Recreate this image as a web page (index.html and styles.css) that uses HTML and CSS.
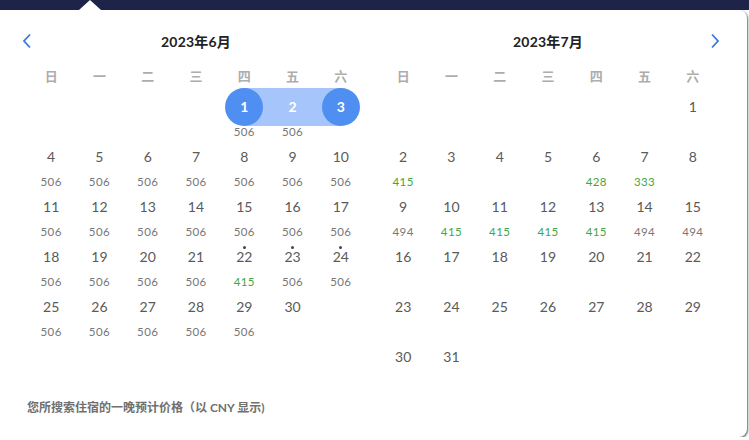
FILE: index.html
```html
<!DOCTYPE html>
<html lang="zh-CN">
<head>
  <meta charset="UTF-8">
  <title>日历</title>
  <link rel="stylesheet" href="styles.css">
</head>
<body>
  <div class="topbar"><span class="caret"></span></div>

  <div class="picker">
    <div class="months">
      <div class="month">
        <div class="month-head">
          <span class="nav nav-prev">
            <svg width="10" height="16" viewBox="0 0 10 16"><path d="M8 1.5 L2 8 L8 14.5" fill="none" stroke="#3a78d8" stroke-width="1.8"/></svg>
          </span>
          <span class="month-title">2023年6月</span>
          <span class="nav"></span>
        </div>
        <div class="weekdays"><span>日</span><span>一</span><span>二</span><span>三</span><span>四</span><span>五</span><span>六</span></div>
        <div class="days" id="june"></div>
      </div>

      <div class="month">
        <div class="month-head">
          <span class="nav"></span>
          <span class="month-title">2023年7月</span>
          <span class="nav nav-next">
            <svg width="10" height="16" viewBox="0 0 10 16"><path d="M2 1.5 L8 8 L2 14.5" fill="none" stroke="#3a78d8" stroke-width="1.8"/></svg>
          </span>
        </div>
        <div class="weekdays"><span>日</span><span>一</span><span>二</span><span>三</span><span>四</span><span>五</span><span>六</span></div>
        <div class="days" id="july"></div>
      </div>
    </div>

    <div class="note">您所搜索住宿的一晚预计价格（以 CNY 显示)</div>
  </div>

  <script>
    // price per day, "g" marks a cheaper (green) price
    const june = {
      start: 4, count: 30,
      prices: {1: '506', 2: '506', 22: '415g'},
      dots: [22, 23, 24],
      range: {1: 'start', 2: 'in', 3: 'end'}
    };
    for (let d = 4; d <= 29; d++) if (!june.prices[d]) june.prices[d] = '506';

    const july = {
      start: 6, count: 31,
      prices: {2: '415g', 6: '428g', 7: '333g', 9: '494', 10: '415g', 11: '415g', 12: '415g', 13: '415g', 14: '494', 15: '494'},
      dots: [],
      range: {}
    };

    function buildMonth(el, m) {
      let html = '';
      for (let i = 0; i < m.start; i++) html += '<div class="day"></div>';
      for (let d = 1; d <= m.count; d++) {
        const p = m.prices[d] || '';
        const green = p.endsWith('g');
        const r = m.range[d] ? ' range-' + m.range[d] : '';
        html += `<div class="day${r}">
          ${m.dots.includes(d) ? '<i class="dot"></i>' : ''}
          <div class="num"><span>${d}</span></div>
          <div class="price${green ? ' low' : ''}">${p.replace('g', '')}</div>
        </div>`;
      }
      el.innerHTML = html;
    }

    buildMonth(document.getElementById('june'), june);
    buildMonth(document.getElementById('july'), july);
  </script>
</body>
</html>
```

FILE: styles.css
```css
html, body {
  margin: 0;
  padding: 0;
  background: #fff;
  font-family: Lato, "Noto Sans CJK SC", sans-serif;
}
.topbar {
  position: relative;
  height: 10px;
  background: #1e2449;
}
.caret {
  position: absolute;
  left: 79px;
  top: 0;
  width: 0;
  height: 0;
  border-left: 11px solid transparent;
  border-right: 11px solid transparent;
  border-bottom: 10px solid #fff;
}
.picker {
  width: 747px;
  height: 427px;
  box-sizing: border-box;
  padding-top: 19px;
  background: #fff;
  border-radius: 0 8px 8px 0;
  box-shadow: 1px 1px 2px rgba(0, 0, 0, 0.6);
}
.months {
  display: flex;
  gap: 14px;
  padding-left: 27px;
}
.month { width: 338px; }
.month-head {
  display: grid;
  grid-template-columns: 1fr auto 1fr;
  align-items: center;
  height: 24px;
}
.month-title {
  font-size: 14px;
  font-weight: 700;
  color: #222;
  letter-spacing: 0.2px;
}
.nav { display: flex; align-items: center; }
.nav-prev { margin-left: -5px; }
.nav-next { justify-content: flex-end; margin-right: -3px; }
.weekdays {
  display: grid;
  grid-template-columns: repeat(7, 1fr);
  height: 24px;
  margin-top: 10px;
  align-items: center;
  text-align: center;
  font-size: 13px;
  font-weight: 700;
  color: #adadad;
}
.days {
  display: grid;
  grid-template-columns: repeat(7, 1fr);
  grid-auto-rows: 50px;
}
.day {
  position: relative;
  text-align: center;
}
.num {
  height: 38px;
  margin-top: 1px;
  display: flex;
  justify-content: center;
  align-items: center;
  font-size: 14px;
  color: #5a5a5a;
}
.num span {
  width: 38px;
  height: 38px;
  line-height: 38px;
  border-radius: 50%;
}
.price {
  height: 12px;
  line-height: 12px;
  font-size: 11.5px;
  color: #777;
  letter-spacing: 0.4px;
}
.price.low { color: #3fa63f; }
.dot {
  position: absolute;
  left: 50%;
  top: 9px;
  width: 3px;
  height: 3px;
  margin-left: -1.5px;
  border-radius: 50%;
  background: #444;
}
.range-in .num { background: #a6c5fa; }
.range-start .num { background: linear-gradient(to right, transparent 50%, #a6c5fa 50%); }
.range-end .num { background: linear-gradient(to right, #a6c5fa 50%, transparent 50%); }
.range-start .num span, .range-end .num span {
  background: #4f8ff2;
}
.range-start .num span, .range-end .num span, .range-in .num span {
  color: #fff;
  font-weight: 700;
}
.note {
  margin-top: 13px;
  padding-left: 27px;
  line-height: 16px;
  font-size: 12px;
  font-weight: 700;
  color: #707070;
}
```
